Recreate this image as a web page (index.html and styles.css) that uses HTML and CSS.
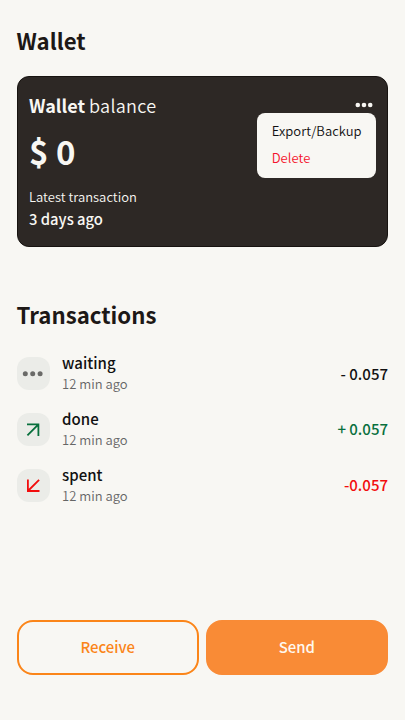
FILE: index.html
```html
<!DOCTYPE html>
<html lang="en">
<head>
<meta charset="utf-8">
<meta name="viewport" content="width=device-width, initial-scale=1">
<title>Wallet</title>
<link rel="stylesheet" href="styles.css">
</head>
<body>
<main class="screen">
  <h1 class="heading wallet-heading">Wallet</h1>
  <section class="card">
    <div class="card-title"><b>Wallet</b> <span class="light">balance</span></div>
    <div class="amount">$ 0</div>
    <div class="latest">Latest transaction</div>
    <div class="latest-time">3 days ago</div>
    <button class="more" aria-label="More"><svg width="18" height="6" viewBox="0 0 18 6" fill="currentColor"><circle cx="2.8" cy="3" r="2.3"/><circle cx="9" cy="3" r="2.3"/><circle cx="15.2" cy="3" r="2.3"/></svg></button>
    <div class="menu">
      <div class="menu-item">Export/Backup</div>
      <div class="menu-item delete">Delete</div>
    </div>
  </section>
  <h2 class="heading transactions-heading">Transactions</h2>
  <ul class="transactions">
    <li class="row">
      <span class="icon waiting"><svg width="33" height="33" viewBox="0 0 33 33" fill="currentColor"><circle cx="8.3" cy="16.7" r="2.5"/><circle cx="15.7" cy="16.7" r="2.5"/><circle cx="23.1" cy="16.7" r="2.5"/></svg></span>
      <div class="details"><div class="name">waiting</div><div class="time">12 min ago</div></div>
      <span class="value">- 0.057</span>
    </li>
    <li class="row">
      <span class="icon green"><svg width="33" height="33" viewBox="0 0 33 33" fill="none" stroke="currentColor" stroke-width="1.8"><path d="M10 11.4H21.4V23M21.4 11.4L10.4 22.4"/></svg></span>
      <div class="details"><div class="name">done</div><div class="time">12 min ago</div></div>
      <span class="value green">+ 0.057</span>
    </li>
    <li class="row">
      <span class="icon red"><svg width="33" height="33" viewBox="0 0 33 33" fill="none" stroke="currentColor" stroke-width="1.8"><path d="M10.9 10.4V22H22.5M10.9 22L22.1 10.8"/></svg></span>
      <div class="details"><div class="name">spent</div><div class="time">12 min ago</div></div>
      <span class="value red">-0.057</span>
    </li>
  </ul>
  <div class="actions">
    <button class="button receive">Receive</button>
    <button class="button send">Send</button>
  </div>
</main>
</body>
</html>
```
FILE: styles.css
```css
* { box-sizing: border-box; }
body {
  margin: 0;
  background: #f8f7f3;
  color: #111;
  font-family: "Noto Sans CJK SC", "Noto Sans", sans-serif;
}
.screen {
  display: flex;
  flex-direction: column;
  height: 720px;
  padding: 24px 17px 45px 16.6px;
}
.heading {
  margin: 0;
  font-size: 22.2px;
  font-weight: 700;
  line-height: 32px;
  color: #1d1816;
}
.card {
  position: relative;
  height: 171px;
  margin-top: 20px;
  padding: 17px 11.4px;
  border: 1px solid #171310;
  border-radius: 12px;
  background: #2d2825;
  color: #f8f7f3;
}
.card-title { margin-top: -1px; font-size: 18px; line-height: 24px; }
.light { font-weight: 350; letter-spacing: 0.3px; }
.amount { margin-top: 14px; font-size: 33px; font-weight: 700; line-height: 40px; }
.latest { margin-top: 16px; font-size: 13px; line-height: 20px; font-weight: 350; letter-spacing: 0.03px; }
.latest-time { margin-top: 1px; font-size: 14.8px; line-height: 22px; font-weight: 500; }
.more {
  position: absolute;
  top: 25px;
  right: 14px;
  display: flex;
  padding: 0;
  border: 0;
  background: none;
  color: #f8f7f3;
}
.menu {
  position: absolute;
  top: 36px;
  right: 11px;
  width: 119px;
  height: 65px;
  padding: 4px 14.7px;
  border-radius: 8px;
  background: #f8f7f3;
  color: #111;
}
.menu-item { font-size: 13px; font-weight: 350; line-height: 27px; letter-spacing: 0.05px; white-space: nowrap; }
.delete { color: #f5132c; }
.transactions-heading { margin-top: 51px; }
.transactions {
  display: grid;
  gap: 22.6px;
  margin: 27.4px 0 0;
  padding: 0;
  list-style: none;
}
.row { display: flex; align-items: center; height: 33px; }
.icon { display: flex; width: 33px; height: 33px; border-radius: 12px; background: #ebece8; }
.details { flex: 1; margin: -1px 0 0 12.5px; }
.name { font-size: 15px; font-weight: 500; line-height: 21px; }
.time { font-size: 13px; font-weight: 350; line-height: 21px; color: #666; }
.value { margin-top: -1px; font-size: 15px; font-weight: 500; line-height: 21px; }
.waiting { color: #6a6a68; }
.green { color: #08703d; }
.red { color: #f20d0d; }
.actions { display: flex; gap: 7px; margin-top: auto; }
.button {
  flex: 1;
  height: 55px;
  padding: 0 0 2px;
  border: 2px solid #fb8519;
  border-radius: 16px;
  background: transparent;
  color: #fb8519;
  font: 500 14.9px/22px "Noto Sans CJK SC", "Noto Sans", sans-serif;
}
.send { border-color: #f98b36; background: #f98b36; color: #fff8ef; }
```
